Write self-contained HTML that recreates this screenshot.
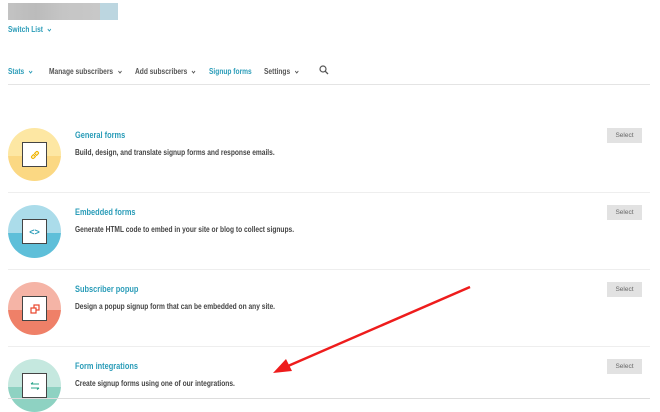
<!DOCTYPE html>
<html><head><meta charset="utf-8"><style>
*{margin:0;padding:0;box-sizing:border-box}
body{width:660px;height:400px;overflow:hidden;background:#fff;font-family:"Liberation Sans",sans-serif;position:relative}
.a{position:absolute;white-space:nowrap}
.n{transform-origin:0 50%;transform:scaleX(.78);display:inline-block;font-weight:bold}
.nav{font-size:8.5px;color:#555;top:66px}
.circ{position:absolute;left:8px;width:53px;height:53px;border-radius:50%;overflow:hidden}
.circ .t,.circ .b{position:absolute;left:0;width:100%}
.circ .t{top:0;height:52%}
.circ .b{top:52%;height:48%}
.box{position:absolute;left:14px;top:14px;width:25px;height:25px;background:#fff;border:1.5px solid #444;display:flex;align-items:center;justify-content:center}
.title{font-size:9.5px;color:#2a9cb8;left:75px}
.desc{font-size:8.5px;color:#444;left:75px}
.sel{position:absolute;left:607px;width:35px;height:15px;background:#e2e2e2;font-size:6.5px;color:#666;text-align:center;line-height:15px}
.sep{position:absolute;left:8px;width:642px;height:1px;background:#eeeeee}
.ch{display:inline-block;width:6px;height:4px;margin-left:3px;vertical-align:middle}
</style></head><body>
<div class="a" style="left:8px;top:3px;width:92px;height:17px;background:linear-gradient(90deg,#c3c3c3 0,#bbb 30%,#c5c5c5 60%,#c8c8c8 100%)"></div>
<div class="a" style="left:100px;top:3px;width:18px;height:17px;background:#bcd6e0"></div>
<div class="a" style="left:8px;top:24px;font-size:8.5px;color:#2a9cb8"><span class="n">Switch List <svg class="ch" viewBox="0 0 6 4"><path d="M1 1 L3 3 L5 1" fill="none" stroke="#2a9cb8" stroke-width="1"/></svg></span></div>

<div class="a nav" style="left:8px;color:#2a9cb8"><span class="n">Stats <svg class="ch" viewBox="0 0 6 4"><path d="M1 1 L3 3 L5 1" fill="none" stroke="#2a9cb8" stroke-width="1"/></svg></span></div>
<div class="a nav" style="left:49px"><span class="n">Manage subscribers <svg class="ch" viewBox="0 0 6 4"><path d="M1 1 L3 3 L5 1" fill="none" stroke="#555" stroke-width="1"/></svg></span></div>
<div class="a nav" style="left:135px"><span class="n">Add subscribers <svg class="ch" viewBox="0 0 6 4"><path d="M1 1 L3 3 L5 1" fill="none" stroke="#555" stroke-width="1"/></svg></span></div>
<div class="a nav" style="left:209px;color:#2a9cb8"><span class="n">Signup forms</span></div>
<div class="a nav" style="left:264px"><span class="n">Settings <svg class="ch" viewBox="0 0 6 4"><path d="M1 1 L3 3 L5 1" fill="none" stroke="#555" stroke-width="1"/></svg></span></div>
<svg class="a" style="left:319px;top:65px" width="10" height="10" viewBox="0 0 10 10"><circle cx="4" cy="4" r="3" fill="none" stroke="#555" stroke-width="1.2"/><line x1="6.2" y1="6.2" x2="9" y2="9" stroke="#555" stroke-width="1.3"/></svg>
<div class="sep" style="top:84px;background:#e4e4e4"></div>

<div class="circ" style="top:128px"><div class="t" style="background:#fde7a3"></div><div class="b" style="background:#fbd883"></div>
<div class="box"><svg width="12" height="12" viewBox="0 0 12 12"><path d="M5 7 L7 5 M4.5 5.5 L3 7 a1.4 1.4 0 0 0 2 2 L6.5 7.5 M7.5 6.5 L9 5 a1.4 1.4 0 0 0 -2 -2 L5.5 4.5" fill="none" stroke="#f0b400" stroke-width="1.2" stroke-linecap="round"/></svg></div></div>
<div class="a title" style="top:130px"><span class="n">General forms</span></div>
<div class="a desc" style="top:147px"><span class="n">Build, design, and translate signup forms and response emails.</span></div>
<div class="sel" style="top:128px">Select</div>
<div class="sep" style="top:192px"></div>

<div class="circ" style="top:205px"><div class="t" style="background:#abdcea"></div><div class="b" style="background:#5ebfd9"></div>
<div class="box"><span style="font-size:9px;color:#2a9cb8;font-weight:bold">&lt;&gt;</span></div></div>
<div class="a title" style="top:207px"><span class="n">Embedded forms</span></div>
<div class="a desc" style="top:224px"><span class="n">Generate HTML code to embed in your site or blog to collect signups.</span></div>
<div class="sel" style="top:205px">Select</div>
<div class="sep" style="top:269px"></div>

<div class="circ" style="top:282px"><div class="t" style="background:#f5b4a6"></div><div class="b" style="background:#ef8068"></div>
<div class="box"><svg width="12" height="12" viewBox="0 0 12 12"><rect x="5" y="2" width="5" height="5" fill="none" stroke="#e8442a" stroke-width="1.2"/><rect x="2" y="5" width="5" height="5" fill="#fff" stroke="#e8442a" stroke-width="1.2"/></svg></div></div>
<div class="a title" style="top:284px"><span class="n">Subscriber popup</span></div>
<div class="a desc" style="top:301px"><span class="n">Design a popup signup form that can be embedded on any site.</span></div>
<div class="sel" style="top:282px">Select</div>
<div class="sep" style="top:346px"></div>

<div class="circ" style="top:359px"><div class="t" style="background:#c5e8df"></div><div class="b" style="background:#8ed2c2"></div>
<div class="box"><svg width="12" height="12" viewBox="0 0 12 12"><path d="M2 4 H10 M2 4 L4 2.5 M10 8 H2 M10 8 L8 9.5" fill="none" stroke="#2aa58a" stroke-width="1.1"/></svg></div></div>
<div class="a title" style="top:361px"><span class="n">Form integrations</span></div>
<div class="a desc" style="top:378px"><span class="n">Create signup forms using one of our integrations.</span></div>
<div class="sel" style="top:359px">Select</div>
<div class="sep" style="top:398px;background:#ddd"></div>

<svg class="a" style="left:0;top:0" width="660" height="400"><line x1="470" y1="287" x2="288" y2="366" stroke="#ee1c1c" stroke-width="2.5"/><polygon points="273,373 286,359 292,371" fill="#ee1c1c"/></svg>
</body></html>
